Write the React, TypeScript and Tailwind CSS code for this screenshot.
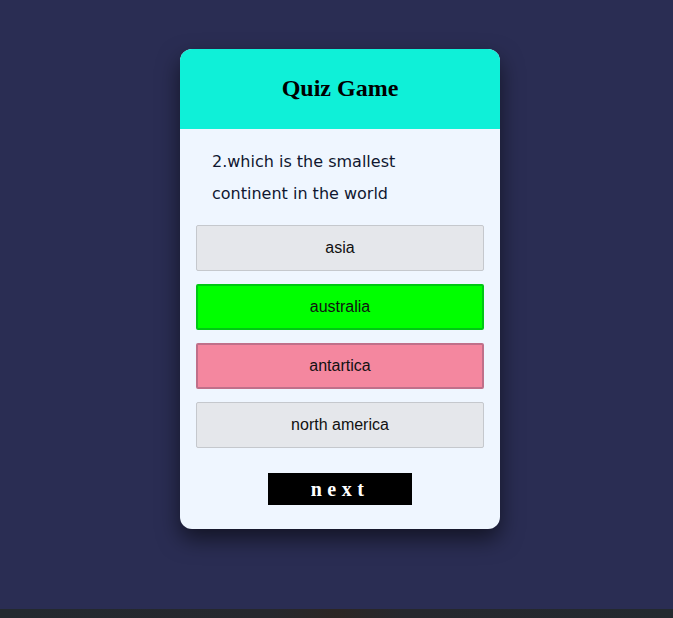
import React from 'react';

const options = [
  { label: 'asia', state: 'idle' },
  { label: 'australia', state: 'correct' },
  { label: 'antartica', state: 'wrong' },
  { label: 'north america', state: 'idle' },
];

const optionClass: Record<string, string> = {
  idle: 'bg-[#e5e7eb] border border-[#c5c8cd]',
  correct: 'bg-[#00ff00] border-2 border-[#00c814]',
  wrong: 'bg-[#f4879f] border-2 border-[#c0708a]',
};

export default function App() {
  return (
    <div className="w-full h-[618px] flex flex-col overflow-hidden">
      <div className="h-[609px] bg-[#2a2d53] flex justify-center pt-[49px] pl-[7px]">
        <div className="w-[320px] h-[480px] rounded-xl bg-[#eff6ff] overflow-hidden shadow-[0_10px_22px_rgba(0,0,0,0.55)]">
          {/* header */}
          <div className="h-[80px] bg-[#0ff0d8] flex items-center justify-center pb-[2px]">
            <h1 className="text-[24px] font-bold text-black font-['Liberation_Serif',serif]">Quiz Game</h1>
          </div>

          <div className="px-4 pt-[17px] pb-6">
            <p className="pl-4 pr-10 text-[16px] leading-[32px] text-[#0f1730] font-['DejaVu_Sans',sans-serif]">
              2.which is the smallest continent in the world
            </p>

            <div className="mt-[15px] flex flex-col gap-[13px]">
              {options.map((o) => (
                <button
                  key={o.label}
                  className={`h-[46px] w-full rounded-[2px] text-[16px] text-[#111] font-['Liberation_Sans',Arial,sans-serif] ${optionClass[o.state]}`}
                >
                  {o.label}
                </button>
              ))}
            </div>

            <div className="mt-[25px] flex justify-center">
              <button className="w-[144px] h-[32px] bg-black text-white text-[20px] font-bold tracking-[5.5px] font-['Liberation_Serif',serif]">
                next
              </button>
            </div>
          </div>
        </div>
      </div>
      <div className="h-[9px] bg-[linear-gradient(90deg,#23292f_0%,#26282e_40%,#2c2624_50%,#26282e_60%,#23292f_100%)]" />
    </div>
  );
}
